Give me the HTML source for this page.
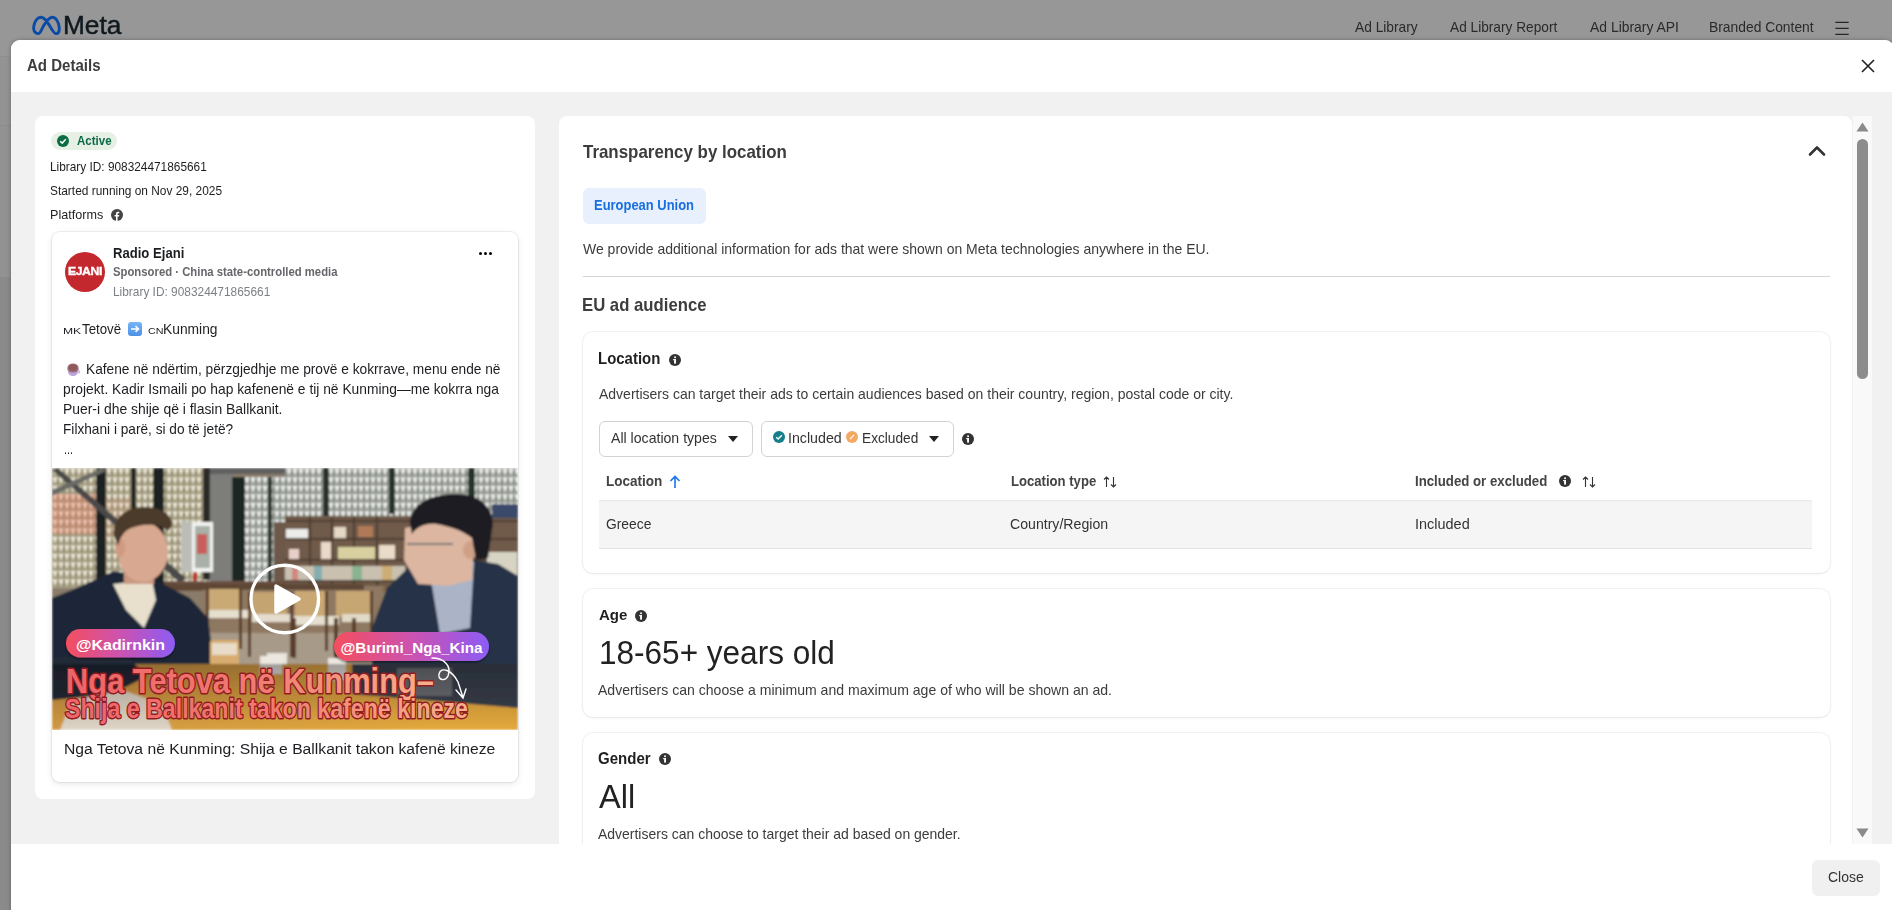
<!DOCTYPE html>
<html><head><meta charset="utf-8">
<style>
*{box-sizing:border-box;margin:0;padding:0}
html,body{width:1892px;height:910px;overflow:hidden}
body{position:relative;background:#8a8a8a;font-family:"Liberation Sans",sans-serif;color:#444}
.a{position:absolute}
.t{position:absolute;white-space:nowrap;line-height:1}
</style></head><body>
<!-- background page under overlay -->
<div class="a" style="left:0;top:0;width:1892px;height:56px;background:#979797"></div>
<div class="a" style="left:0;top:56px;width:1892px;height:1px;background:#8e8e8e"></div>
<div class="a" style="left:0;top:57px;width:1892px;height:68px;background:#939393"></div>
<div class="a" style="left:0;top:125px;width:1892px;height:1px;background:#8b8b8b"></div>
<div class="a" style="left:0;top:126px;width:1892px;height:151px;background:#929292"></div>

<!-- meta logo -->
<svg class="a" style="left:0;top:0" width="70" height="45" viewBox="0 0 70 45">
<path d="M38.5 33.6C34.5 33.6 33 30 33.8 26C34.8 21 37.6 17.2 41 17.2C44.5 17.2 47 21.5 49.8 26C52.5 30.5 54 33.6 56.2 33.6C58.8 33.6 59.6 30.5 59.2 27C58.6 22 55.8 17.2 52.4 17.2C49 17.2 46.2 21.5 43.6 25.8C41 30.2 40.6 33.6 38.5 33.6Z" fill="none" stroke="#0b4ba6" stroke-width="2.9" stroke-linejoin="round"/>
</svg>

<svg class="a" style="left:1834px;top:18px" width="16" height="20" viewBox="0 0 16 20"><path d="M1.3 4.3H14.7M1.3 10.3H14.7M1.3 16.3H14.7" stroke="#262626" stroke-width="1.25"/></svg>

<!-- modal -->
<div class="a" style="left:11px;top:40px;width:1883px;height:880px;background:#f1f1f1;border-radius:9px 9px 0 0;overflow:hidden;box-shadow:0 0 4px rgba(0,0,0,0.28)">
  <div class="a" style="left:0;top:0;width:1881px;height:52px;background:#fff"></div>
  <div class="a" style="left:0;top:804px;width:1881px;height:80px;background:#fff"></div>
</div>
<svg class="a" style="left:1861px;top:59px" width="14" height="14" viewBox="0 0 14 14"><path d="M1 1L13 13M13 1L1 13" stroke="#222" stroke-width="1.6"/></svg>


<!-- LEFT CARD -->
<div class="a" style="left:35px;top:116px;width:500px;height:683px;background:#fff;border-radius:8px"></div>
<div class="a" style="left:51px;top:132px;width:66px;height:18px;background:#e6f0e4;border-radius:9px"></div>
<svg class="a" style="left:57px;top:135px" width="12" height="12" viewBox="0 0 12 12"><circle cx="6" cy="6" r="6" fill="#0b6b42"/><path d="M3.2 6.2L5.2 8.1L8.8 4.3" fill="none" stroke="#fff" stroke-width="1.5"/></svg>
<svg class="a" style="left:111px;top:209px" width="12" height="12" viewBox="0 0 12 12"><circle cx="6" cy="6" r="6" fill="#444"/><path d="M6.6 12V7.6H8L8.25 6H6.6V5C6.6 4.5 6.8 4.2 7.4 4.2H8.3V2.8C8 2.75 7.5 2.7 7 2.7C5.8 2.7 5 3.4 5 4.8V6H3.6V7.6H5V12Z" fill="#fff"/></svg>

<!-- post card -->
<div class="a" style="left:52px;top:232px;width:466px;height:550px;background:#fff;border-radius:8px;box-shadow:0 0 0 1px rgba(0,0,0,0.06),0 2px 6px rgba(0,0,0,0.10)"></div>
<div class="a" style="left:65px;top:252px;width:40px;height:40px;border-radius:50%;background:#c4282f"></div>
<div class="a" style="left:479px;top:252px;width:3px;height:3px;border-radius:50%;background:#000"></div>
<div class="a" style="left:484px;top:252px;width:3px;height:3px;border-radius:50%;background:#000"></div>
<div class="a" style="left:489px;top:252px;width:3px;height:3px;border-radius:50%;background:#000"></div>

<div class="a" style="left:128px;top:322px;width:14px;height:14px;border-radius:3px;background:linear-gradient(#76b6f6,#4d8fe6)"></div>
<svg class="a" style="left:128px;top:322px" width="14" height="14" viewBox="0 0 14 14"><path d="M3 7H10M7.5 4.2L10.5 7L7.5 9.8" fill="none" stroke="#fff" stroke-width="1.6"/></svg>

<svg class="a" style="left:66px;top:362px" width="15" height="15" viewBox="0 0 15 15"><path d="M1.5 6.5C1.5 11.5 3.5 14 7 14C10.5 14 12.5 11.5 12.5 6.5Z" fill="#b9a5d8"/><path d="M12 8.5C14 8.3 14.2 11 12 11" fill="none" stroke="#c9b8e4" stroke-width="1.3"/><ellipse cx="7" cy="6" rx="5.6" ry="4.6" fill="#a06a70"/><ellipse cx="7" cy="5.6" rx="4.2" ry="3.2" fill="#8d5a5e"/></svg>


<!-- VIDEO -->
<svg class="a" style="left:52px;top:468px" width="466" height="262" viewBox="0 0 466 262">
<defs>
<pattern id="lat" width="6" height="8.5" patternUnits="userSpaceOnUse">
<rect width="6" height="8.5" fill="#9c9478"/>
<path d="M0.6 0.8L5.4 0.8L3 7.8Z" fill="#f0ecdc"/>
</pattern>
<pattern id="latg" width="6" height="8.5" patternUnits="userSpaceOnUse">
<rect width="6" height="8.5" fill="#8e948c"/>
<path d="M0.6 0.8L5.4 0.8L3 7.8Z" fill="#f4f4f2"/>
</pattern>
<linearGradient id="pill" x1="0" x2="1" y1="0" y2="0"><stop offset="0" stop-color="#f44f5e"/><stop offset="0.5" stop-color="#cc52b0"/><stop offset="1" stop-color="#8c5cf5"/></linearGradient>
<linearGradient id="tgrad" x1="0" x2="1" y1="0" y2="0"><stop offset="0" stop-color="#ee6468"/><stop offset="0.5" stop-color="#f07a70"/><stop offset="1" stop-color="#f5b08c"/></linearGradient>
<linearGradient id="tbl" x1="0" x2="1" y1="0" y2="0.3"><stop offset="0" stop-color="#d49a48"/><stop offset="1" stop-color="#eeb040"/></linearGradient><linearGradient id="band" x1="0" x2="0" y1="0" y2="1"><stop offset="0" stop-color="#000" stop-opacity="0.32"/><stop offset="1" stop-color="#000" stop-opacity="0.04"/></linearGradient>
<filter id="bl" x="0" y="0" width="100%" height="100%"><feGaussianBlur stdDeviation="0.9"/></filter>
<filter id="sh" x="-10%" y="-30%" width="120%" height="160%"><feDropShadow dx="0" dy="1.5" stdDeviation="1" flood-color="#000" flood-opacity="0.5"/></filter>
</defs>
<g filter="url(#bl)">
<rect width="466" height="262" fill="#8a7c6a"/>
<!-- left lattice -->
<rect x="0" y="0" width="160" height="120" fill="url(#lat)"/>
<rect x="0" y="26" width="44" height="40" fill="#f07860" opacity="0.35"/>
<rect x="54" y="30" width="25" height="40" fill="#f08060" opacity="0.12"/>
<rect x="44" y="0" width="10" height="118" fill="#1d2220"/>
<rect x="79" y="0" width="5" height="118" fill="#222826"/>
<rect x="101" y="0" width="11" height="118" fill="#1d2220"/>
<rect x="151" y="0" width="7" height="112" fill="#2a2a28"/>
<path d="M0 2L6 0L134 110L128 115Z" fill="#4a4a48"/>
<path d="M0 22L50 0L54 3L0 28Z" fill="#6a6a66"/>
<rect x="158" y="0" width="24" height="118" fill="#7d7d7a"/>
<rect x="158" y="0" width="308" height="6" fill="#5e605e"/>
<!-- picture frame -->
<rect x="129" y="53" width="12" height="51" fill="#bdbdb8"/>
<rect x="140" y="54" width="21" height="50" fill="#f2f2f0"/>
<rect x="143" y="58" width="15" height="42" fill="#a8b0a8"/>
<rect x="145" y="66" width="10" height="20" fill="#d04848" opacity="0.8"/>
<rect x="141" y="104" width="4" height="9" fill="#c02020"/>
<!-- right lattice -->
<rect x="182" y="9" width="51" height="110" fill="url(#latg)"/>
<rect x="180" y="9" width="13" height="110" fill="#1f2624"/>
<rect x="216" y="9" width="4" height="110" fill="#26302c"/>
<rect x="222" y="54" width="11" height="60" fill="#6e5848"/>
<!-- top lattice right -->
<rect x="233" y="0" width="233" height="50" fill="url(#latg)"/>
<rect x="271" y="0" width="6" height="50" fill="#26302c"/>
<rect x="337" y="0" width="6" height="46" fill="#26302c"/>
<rect x="416" y="0" width="7" height="38" fill="#26302c"/>
<!-- bookshelf -->
<rect x="233" y="48" width="233" height="75" fill="#6f5a4a"/>
<rect x="233" y="52" width="233" height="2" fill="#4e3e32"/>
<rect x="233" y="70" width="233" height="2" fill="#4e3e32"/>
<rect x="233" y="91" width="233" height="2" fill="#4e3e32"/>
<rect x="233" y="112" width="233" height="2" fill="#4e3e32"/>
<rect x="257" y="48" width="2" height="75" fill="#4e3e32"/>
<rect x="279" y="48" width="2" height="75" fill="#4e3e32"/>
<rect x="301" y="48" width="2" height="75" fill="#4e3e32"/>
<rect x="324" y="48" width="2" height="75" fill="#4e3e32"/>
<rect x="234" y="61" width="22" height="9" fill="#ececea"/>
<rect x="282" y="59" width="12" height="11" fill="#e4d8c4"/>
<rect x="306" y="58" width="15" height="11" fill="#b07a58"/>
<rect x="237" y="81" width="10" height="10" fill="#e8d0c8"/>
<rect x="269" y="74" width="10" height="17" fill="#ead8c8"/>
<rect x="286" y="79" width="37" height="12" fill="#d8d0a0"/>
<rect x="327" y="77" width="16" height="14" fill="#eadcc8"/>
<rect x="233" y="98" width="120" height="14" fill="#c9c0b0"/>
<rect x="240" y="98" width="6" height="14" fill="#d86060" opacity="0.6"/>
<rect x="262" y="98" width="8" height="14" fill="#5aa0b0" opacity="0.6"/>
<rect x="300" y="98" width="10" height="14" fill="#60a880" opacity="0.6"/>
<rect x="330" y="98" width="10" height="14" fill="#d0a050" opacity="0.6"/>
<rect x="435" y="84" width="30" height="26" fill="#d8d4c4"/>
<rect x="440" y="36" width="26" height="14" fill="#3a4a6a"/>
<!-- counter -->
<rect x="112" y="113" width="122" height="10" fill="#6a5040"/>
<rect x="233" y="118" width="100" height="6" fill="#8a6a50"/>
<!-- middle restaurant: floor, chairs -->
<rect x="150" y="118" width="180" height="78" fill="#8e7862"/>
<rect x="150" y="165" width="180" height="31" fill="#a89a88"/>
<rect x="112" y="116" width="200" height="6" fill="#5e4636"/>
<rect x="156" y="121" width="32" height="22" fill="#c9aa76"/>
<rect x="197" y="124" width="38" height="22" fill="#c4a470"/>
<rect x="243" y="123" width="30" height="26" fill="#caa874"/>
<rect x="284" y="123" width="36" height="26" fill="#c6a672"/>
<rect x="156" y="142" width="40" height="8" fill="#e6dece"/>
<rect x="200" y="146" width="40" height="8" fill="#e4dccc"/>
<rect x="242" y="148" width="45" height="9" fill="#e6dece"/>
<rect x="290" y="146" width="30" height="8" fill="#e2dac8"/>
<rect x="154" y="121" width="3" height="60" fill="#5a3e2a"/>
<rect x="187" y="121" width="3" height="60" fill="#5a3e2a"/>
<rect x="196" y="124" width="3" height="65" fill="#5a3e2a"/>
<rect x="238" y="124" width="3" height="65" fill="#5a3e2a"/>
<rect x="273" y="123" width="3" height="60" fill="#5a3e2a"/>
<rect x="240" y="150" width="4" height="40" fill="#5a3e2a"/>
<rect x="282" y="150" width="4" height="40" fill="#5a3e2a"/>
<rect x="300" y="150" width="4" height="40" fill="#5a3e2a"/>
<rect x="318" y="123" width="3" height="50" fill="#5a3e2a"/>
<!-- man1 -->
<path d="M0 130L20 122L62 103L100 110L138 130L156 150L162 196L0 196Z" fill="#1f2838"/>
<path d="M61 116L100 112L104 132L92 160L74 142Z" fill="#e8e0cc"/>
<rect x="72" y="98" width="30" height="18" fill="#c99880"/>
<ellipse cx="91" cy="84" rx="25" ry="30" fill="#d8a890"/>
<ellipse cx="68" cy="80" rx="5" ry="9" fill="#cf9a80"/>
<path d="M62 68C60 50 74 39 92 39C110 39 121 47 120 58L116 63C108 56 96 56 86 58C78 60 70 62 66 78Z" fill="#4c3a2c"/>
<!-- glass & cups -->
<rect x="158" y="172" width="29" height="60" rx="3" fill="#d8ac70"/>
<rect x="160" y="175" width="25" height="12" fill="#e8dcc8"/>
<rect x="215" y="185" width="20" height="20" fill="#e8e4dc"/>
<!-- man2 -->
<path d="M320 160L335 120L356 100L378 93L422 92L446 96L466 108L466 240L320 240Z" fill="#283246"/>
<path d="M376 94L422 94L418 160L388 166Z" fill="#aab4c6"/>
<rect x="380" y="92" width="36" height="14" fill="#202632"/>
<path d="M353 60L398 50L422 70L420 112L396 118L366 116L352 92Z" fill="#dcb6a0"/>
<ellipse cx="418" cy="82" rx="7" ry="9" fill="#cfa088"/>
<path d="M358 56C358 35 380 26 404 26C430 26 444 42 440 62L436 90L424 92L420 70C410 62 396 58 384 56C372 55 364 60 360 66Z" fill="#1c1c20"/>
<rect x="355" y="75" width="46" height="2" fill="#777"/>
<!-- table -->
<rect x="0" y="196" width="466" height="66" fill="url(#tbl)"/>
<path d="M0 190L72 186L95 208L60 226L0 232Z" fill="#242a38"/>
<path d="M8 262L20 232L70 222L110 236L120 262Z" fill="#e8dece"/>
<rect x="276" y="190" width="18" height="22" fill="#ece8e0"/>
<rect x="208" y="188" width="22" height="18" fill="#ece8e0"/>
<path d="M300 196L466 196L466 240L300 226Z" fill="#3c4250"/>
<rect x="345" y="200" width="55" height="28" fill="#9a9a9a" opacity="0.55"/>
<path d="M0 196H466V262H0Z" fill="url(#band)"/>

</g>
<!-- play -->
<circle cx="232.8" cy="131" r="33.8" fill="none" stroke="#fff" stroke-width="3.4"/>
<path d="M224 118L247 131L224 144Z" fill="#fff" stroke="#fff" stroke-width="3.5" stroke-linejoin="round"/>
<!-- pills -->
<rect x="14" y="161" width="109" height="28.5" rx="14.2" fill="url(#pill)" filter="url(#sh)"/>
<text x="24" y="181.5" font-family="Liberation Sans" font-weight="700" font-size="14.5" fill="#fff" textLength="89" lengthAdjust="spacingAndGlyphs">@Kadirnkin</text>
<rect x="282" y="164" width="155" height="29" rx="14.5" fill="url(#pill)" filter="url(#sh)"/>
<text x="288.5" y="185" font-family="Liberation Sans" font-weight="700" font-size="14.5" fill="#fff" textLength="142" lengthAdjust="spacingAndGlyphs">@Burimi_Nga_Kina</text>
<!-- title -->
<text x="14" y="225" font-family="Liberation Sans" font-weight="700" font-size="35" fill="url(#tgrad)" stroke="#901c22" stroke-width="3" stroke-linejoin="round" paint-order="stroke" textLength="368" lengthAdjust="spacingAndGlyphs">Nga Tetova në Kunming–</text>
<text x="13" y="250" font-family="Liberation Sans" font-weight="700" font-size="27.5" fill="url(#tgrad)" stroke="#901c22" stroke-width="2.8" stroke-linejoin="round" paint-order="stroke" textLength="403" lengthAdjust="spacingAndGlyphs">Shija e Ballkanit takon kafenë kineze</text>
<path d="M380 190C392 190 400 198 396 208C393 214 386 212 387 206C389 198 400 202 406 214C408 220 410 226 411 230M404 222L411 230L414 221" fill="none" stroke="#fff" stroke-width="1.4" stroke-linecap="round"/>
</svg>




<!-- RIGHT CARD -->
<div class="a" style="left:559px;top:116px;width:1293px;height:740px;background:#fff;border-radius:8px 8px 0 0"></div>
<svg class="a" style="left:1807px;top:144px" width="20" height="14" viewBox="0 0 20 14"><path d="M3 10.5L10 3.5L17 10.5" fill="none" stroke="#333" stroke-width="2.6" stroke-linecap="round" stroke-linejoin="round"/></svg>
<div class="a" style="left:583px;top:188px;width:123px;height:36px;background:#e7f0fc;border-radius:6px"></div>
<div class="a" style="left:583px;top:276px;width:1247px;height:1px;background:#d4d4d4"></div>

<!-- location card -->
<div class="a" style="left:583px;top:332px;width:1247px;height:241px;background:#fff;border-radius:10px;box-shadow:0 0 0 1px rgba(0,0,0,0.045),0 1px 3px rgba(0,0,0,0.06)"></div>
<svg class="a" style="left:669px;top:354px" width="12" height="12" viewBox="0 0 12 12"><circle cx="6" cy="6" r="6" fill="#333"/><rect x="5.1" y="5" width="1.9" height="4.6" fill="#fff"/><rect x="4.2" y="5" width="1.2" height="1.2" fill="#fff"/><circle cx="6.05" cy="3.2" r="1" fill="#fff"/></svg>
<div class="a" style="left:599px;top:421px;width:154px;height:36px;border:1px solid #d3d3d3;border-radius:6px"></div>
<svg class="a" style="left:727px;top:435px" width="12" height="8" viewBox="0 0 12 8"><path d="M1 1H11L6 7Z" fill="#222"/></svg>
<div class="a" style="left:761px;top:421px;width:193px;height:36px;border:1px solid #d3d3d3;border-radius:6px"></div>
<svg class="a" style="left:773px;top:431px" width="12" height="12" viewBox="0 0 12 12"><circle cx="6" cy="6" r="6" fill="#13808a"/><path d="M3.2 6.2L5.1 8L8.8 4.2" fill="none" stroke="#fff" stroke-width="1.4"/></svg>
<svg class="a" style="left:846px;top:431px" width="12" height="12" viewBox="0 0 12 12"><circle cx="6" cy="6" r="6" fill="#f4a861"/><path d="M4 8.2L8 3.8" fill="none" stroke="#fff" stroke-width="1.2"/></svg>
<svg class="a" style="left:928px;top:435px" width="12" height="8" viewBox="0 0 12 8"><path d="M1 1H11L6 7Z" fill="#222"/></svg>
<svg class="a" style="left:962px;top:433px" width="12" height="12" viewBox="0 0 12 12"><circle cx="6" cy="6" r="6" fill="#333"/><rect x="5.1" y="5" width="1.9" height="4.6" fill="#fff"/><rect x="4.2" y="5" width="1.2" height="1.2" fill="#fff"/><circle cx="6.05" cy="3.2" r="1" fill="#fff"/></svg>

<svg class="a" style="left:669px;top:475px" width="12" height="14" viewBox="0 0 12 14"><path d="M6 13V2M1.5 6L6 1.5L10.5 6" fill="none" stroke="#1877f2" stroke-width="1.6"/></svg>
<svg class="a" style="left:1103px;top:476px" width="14" height="12" viewBox="0 0 14 12"><path d="M3.5 11V1M1 3.5L3.5 1L6 3.5M10.5 1V11M8 8.5L10.5 11L13 8.5" fill="none" stroke="#333" stroke-width="1.1"/></svg>
<svg class="a" style="left:1559px;top:475px" width="12" height="12" viewBox="0 0 12 12"><circle cx="6" cy="6" r="6" fill="#333"/><rect x="5.1" y="5" width="1.9" height="4.6" fill="#fff"/><rect x="4.2" y="5" width="1.2" height="1.2" fill="#fff"/><circle cx="6.05" cy="3.2" r="1" fill="#fff"/></svg>
<svg class="a" style="left:1582px;top:476px" width="14" height="12" viewBox="0 0 14 12"><path d="M3.5 11V1M1 3.5L3.5 1L6 3.5M10.5 1V11M8 8.5L10.5 11L13 8.5" fill="none" stroke="#333" stroke-width="1.1"/></svg>

<div class="a" style="left:599px;top:500px;width:1213px;height:49px;background:#f5f5f5;border-bottom:1px solid #e2e2e2;box-shadow:inset 0 2px 2px -1px rgba(0,0,0,0.06)"></div>

<!-- age card -->
<div class="a" style="left:583px;top:589px;width:1247px;height:128px;background:#fff;border-radius:10px;box-shadow:0 0 0 1px rgba(0,0,0,0.045),0 1px 3px rgba(0,0,0,0.06)"></div>
<svg class="a" style="left:635px;top:610px" width="12" height="12" viewBox="0 0 12 12"><circle cx="6" cy="6" r="6" fill="#333"/><rect x="5.1" y="5" width="1.9" height="4.6" fill="#fff"/><rect x="4.2" y="5" width="1.2" height="1.2" fill="#fff"/><circle cx="6.05" cy="3.2" r="1" fill="#fff"/></svg>

<!-- gender card -->
<div class="a" style="left:583px;top:733px;width:1247px;height:160px;background:#fff;border-radius:10px;box-shadow:0 0 0 1px rgba(0,0,0,0.045),0 1px 3px rgba(0,0,0,0.06)"></div>
<svg class="a" style="left:659px;top:753px" width="12" height="12" viewBox="0 0 12 12"><circle cx="6" cy="6" r="6" fill="#333"/><rect x="5.1" y="5" width="1.9" height="4.6" fill="#fff"/><rect x="4.2" y="5" width="1.2" height="1.2" fill="#fff"/><circle cx="6.05" cy="3.2" r="1" fill="#fff"/></svg>

<!-- scrollbar -->
<div class="a" style="left:1853px;top:116px;width:19px;height:728px;background:#f9f9f9"></div>
<svg class="a" style="left:1856px;top:122px" width="13" height="10" viewBox="0 0 13 10"><path d="M6.5 0.5L12.5 9.5H0.5Z" fill="#8a8a8a"/></svg>
<div class="a" style="left:1857px;top:139px;width:11px;height:240px;background:#8c8c8c;border-radius:6px"></div>
<svg class="a" style="left:1856px;top:828px" width="13" height="10" viewBox="0 0 13 10"><path d="M0.5 0.5H12.5L6.5 9.5Z" fill="#8a8a8a"/></svg>

<!-- footer close -->
<div class="a" style="left:11px;top:844px;width:1881px;height:66px;background:#fff"></div>
<div class="a" style="left:1812px;top:860px;width:68px;height:36px;background:#f0f0f0;border-radius:6px"></div>
<div class="t" style="left:62.99px;top:14px;font-size:24.85px;font-weight:400;color:#10191e;transform:scaleX(1.0556);transform-origin:0 0;-webkit-text-stroke:0.45px #10191e">Meta</div>
<div class="t" style="left:1355.10px;top:20px;font-size:14.30px;font-weight:400;color:#2a2a2a;transform:scaleX(0.9615);transform-origin:0 0;">Ad Library</div>
<div class="t" style="left:1450.00px;top:20px;font-size:14.30px;font-weight:400;color:#2a2a2a;transform:scaleX(0.9571);transform-origin:0 0;">Ad Library Report</div>
<div class="t" style="left:1589.60px;top:20px;font-size:14.30px;font-weight:400;color:#2a2a2a;transform:scaleX(0.9733);transform-origin:0 0;">Ad Library API</div>
<div class="t" style="left:1709.23px;top:20px;font-size:14.30px;font-weight:400;color:#2a2a2a;transform:scaleX(0.9682);transform-origin:0 0;">Branded Content</div>
<div class="t" style="left:26.70px;top:57px;font-size:16.30px;font-weight:700;color:#3d3d3d;transform:scaleX(0.9241);transform-origin:0 0;">Ad Details</div>
<div class="t" style="left:76.90px;top:135px;font-size:12.60px;font-weight:700;color:#0b6a47;transform:scaleX(0.9135);transform-origin:0 0;">Active</div>
<div class="t" style="left:50.03px;top:161px;font-size:12.20px;font-weight:400;color:#1c1e21;transform:scaleX(0.9719);transform-origin:0 0;">Library ID: 908324471865661</div>
<div class="t" style="left:50.02px;top:185px;font-size:12.20px;font-weight:400;color:#1c1e21;transform:scaleX(0.9766);transform-origin:0 0;">Started running on Nov 29, 2025</div>
<div class="t" style="left:49.97px;top:209px;font-size:12.20px;font-weight:400;color:#1c1e21;transform:scaleX(1.0340);transform-origin:0 0;">Platforms</div>
<div class="t" style="left:112.78px;top:246px;font-size:14.30px;font-weight:700;color:#1c1e21;transform:scaleX(0.9158);transform-origin:0 0;">Radio Ejani</div>
<div class="t" style="left:112.77px;top:266px;font-size:12.20px;font-weight:700;color:#65676b;transform:scaleX(0.9286);transform-origin:0 0;">Sponsored · China state-controlled media</div>
<div class="t" style="left:112.73px;top:286px;font-size:12.20px;font-weight:400;color:#7d8085;transform:scaleX(0.9750);transform-origin:0 0;">Library ID: 908324471865661</div>
<div class="t" style="left:67.79px;top:266px;font-size:11.00px;font-weight:700;color:#fff;transform:scaleX(1.1138);transform-origin:0 0;-webkit-text-stroke:0.35px #fff;letter-spacing:-0.4px">EJANI</div>
<div class="t" style="left:62.85px;top:327px;font-size:9.00px;font-weight:400;color:#1c1e21;transform:scaleX(1.3500);transform-origin:0 0;">MK</div>
<div class="t" style="left:148.40px;top:327px;font-size:9.00px;font-weight:400;color:#1c1e21;transform:scaleX(1.1917);transform-origin:0 0;">CN</div>
<div class="t" style="left:82.30px;top:322px;font-size:14.30px;font-weight:400;color:#1c1e21;transform:scaleX(0.9286);transform-origin:0 0;">Tetovë</div>
<div class="t" style="left:162.83px;top:322px;font-size:14.30px;font-weight:400;color:#1c1e21;transform:scaleX(0.9655);transform-origin:0 0;">Kunming</div>
<div class="t" style="left:86.03px;top:362px;font-size:14.10px;font-weight:400;color:#1c1e21;transform:scaleX(0.9725);transform-origin:0 0;">Kafene në ndërtim, përzgjedhje me provë e kokrrave, menu ende në</div>
<div class="t" style="left:63.32px;top:382px;font-size:14.10px;font-weight:400;color:#1c1e21;transform:scaleX(0.9797);transform-origin:0 0;">projekt. Kadir Ismaili po hap kafenenë e tij në Kunming—me kokrra nga</div>
<div class="t" style="left:63.31px;top:402px;font-size:14.10px;font-weight:400;color:#1c1e21;transform:scaleX(0.9864);transform-origin:0 0;">Puer-i dhe shije që i flasin Ballkanit.</div>
<div class="t" style="left:63.33px;top:422px;font-size:14.10px;font-weight:400;color:#1c1e21;transform:scaleX(0.9695);transform-origin:0 0;">Filxhani i parë, si do të jetë?</div>
<div class="t" style="left:63.53px;top:442px;font-size:14.10px;font-weight:400;color:#1c1e21;transform:scaleX(0.7700);transform-origin:0 0;">...</div>
<div class="t" style="left:63.66px;top:741px;font-size:15.10px;font-weight:400;color:#1c1e21;transform:scaleX(1.0391);transform-origin:0 0;">Nga Tetova në Kunming: Shija e Ballkanit takon kafenë kineze</div>
<div class="t" style="left:582.90px;top:143px;font-size:18.60px;font-weight:700;color:#3d3d3d;transform:scaleX(0.9090);transform-origin:0 0;">Transparency by location</div>
<div class="t" style="left:593.76px;top:199px;font-size:13.80px;font-weight:700;color:#1a6fe0;transform:scaleX(0.9381);transform-origin:0 0;">European Union</div>
<div class="t" style="left:582.60px;top:242px;font-size:14.30px;font-weight:400;color:#3c3c3c;transform:scaleX(0.9784);transform-origin:0 0;">We provide additional information for ads that were shown on Meta technologies anywhere in the EU.</div>
<div class="t" style="left:582.32px;top:295px;font-size:19.00px;font-weight:700;color:#3d3d3d;transform:scaleX(0.8800);transform-origin:0 0;">EU ad audience</div>
<div class="t" style="left:598.18px;top:350px;font-size:16.20px;font-weight:700;color:#1f1f1f;transform:scaleX(0.9242);transform-origin:0 0;">Location</div>
<div class="t" style="left:599.00px;top:387px;font-size:14.10px;font-weight:400;color:#3c3c3c;transform:scaleX(0.9931);transform-origin:0 0;">Advertisers can target their ads to certain audiences based on their country, region, postal code or city.</div>
<div class="t" style="left:611.00px;top:431px;font-size:14.20px;font-weight:400;color:#333;transform:scaleX(0.9943);transform-origin:0 0;">All location types</div>
<div class="t" style="left:788.30px;top:431px;font-size:14.20px;font-weight:400;color:#333;transform:scaleX(1.0019);transform-origin:0 0;">Included</div>
<div class="t" style="left:861.74px;top:431px;font-size:14.20px;font-weight:400;color:#333;transform:scaleX(0.9649);transform-origin:0 0;">Excluded</div>
<div class="t" style="left:605.57px;top:474px;font-size:14.60px;font-weight:700;color:#444;transform:scaleX(0.9271);transform-origin:0 0;">Location</div>
<div class="t" style="left:1010.80px;top:474px;font-size:14.60px;font-weight:700;color:#444;transform:scaleX(0.8979);transform-origin:0 0;">Location type</div>
<div class="t" style="left:1414.89px;top:474px;font-size:14.60px;font-weight:700;color:#444;transform:scaleX(0.9062);transform-origin:0 0;">Included or excluded</div>
<div class="t" style="left:605.51px;top:517px;font-size:14.00px;font-weight:400;color:#333;transform:scaleX(0.9886);transform-origin:0 0;">Greece</div>
<div class="t" style="left:1010.49px;top:517px;font-size:14.00px;font-weight:400;color:#333;transform:scaleX(1.0083);transform-origin:0 0;">Country/Region</div>
<div class="t" style="left:1414.97px;top:517px;font-size:14.00px;font-weight:400;color:#333;transform:scaleX(1.0333);transform-origin:0 0;">Included</div>
<div class="t" style="left:598.90px;top:607px;font-size:15.00px;font-weight:700;color:#1f1f1f;transform:scaleX(1.0036);transform-origin:0 0;">Age</div>
<div class="t" style="left:598.61px;top:636px;font-size:33.30px;font-weight:400;color:#222;transform:scaleX(0.9469);transform-origin:0 0;">18-65+ years old</div>
<div class="t" style="left:598.30px;top:684px;font-size:13.90px;font-weight:400;color:#3c3c3c;transform:scaleX(1.0118);transform-origin:0 0;">Advertisers can choose a minimum and maximum age of who will be shown an ad.</div>
<div class="t" style="left:598.05px;top:751px;font-size:15.80px;font-weight:700;color:#1f1f1f;transform:scaleX(0.9519);transform-origin:0 0;">Gender</div>
<div class="t" style="left:599.30px;top:780px;font-size:33.30px;font-weight:400;color:#222;transform:scaleX(0.9771);transform-origin:0 0;">All</div>
<div class="t" style="left:598.30px;top:828px;font-size:13.90px;font-weight:400;color:#3c3c3c;transform:scaleX(1.0056);transform-origin:0 0;">Advertisers can choose to target their ad based on gender.</div>
<div class="t" style="left:1827.95px;top:870px;font-size:14.70px;font-weight:400;color:#333;transform:scaleX(0.9528);transform-origin:0 0;">Close</div>
</body></html>
